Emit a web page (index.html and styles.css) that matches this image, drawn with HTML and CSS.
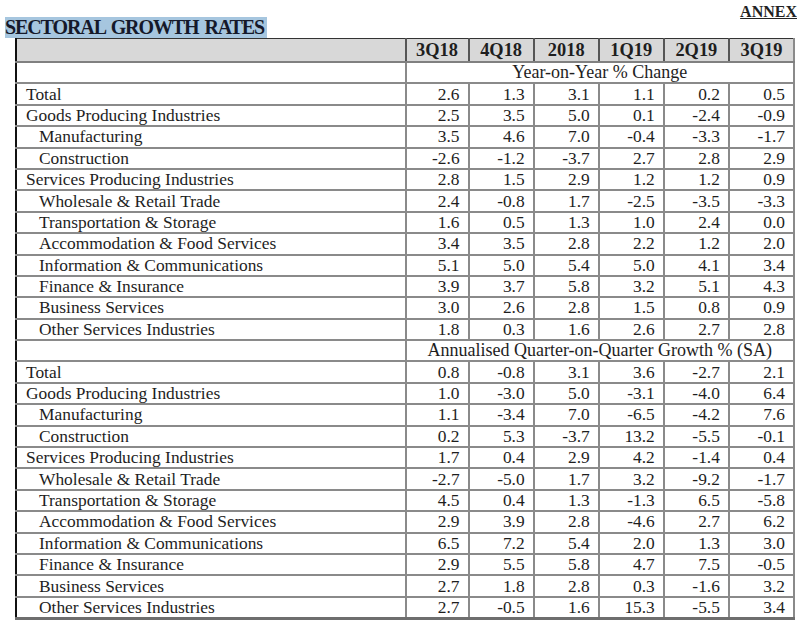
FILE: index.html
```html
<!DOCTYPE html>
<html>
<head>
<meta charset="utf-8">
<link rel="stylesheet" href="styles.css">
</head>
<body>
<div class="page">
  <div class="annex">ANNEX</div>
  <div class="title-row"><span class="title">SECTORAL GROWTH RATES</span></div>
  <table class="grid">
    <colgroup>
      <col class="c-label">
      <col class="c1"><col class="c2"><col class="c3"><col class="c4"><col class="c5"><col class="c6">
    </colgroup>
    <thead>
      <tr class="head">
        <th></th><th>3Q18</th><th>4Q18</th><th>2018</th><th>1Q19</th><th>2Q19</th><th>3Q19</th>
      </tr>
    </thead>
    <tbody>
      <tr class="sub"><td></td><td colspan="6">Year-on-Year % Change</td></tr>
      <tr><td>Total</td><td>2.6</td><td>1.3</td><td>3.1</td><td>1.1</td><td>0.2</td><td>0.5</td></tr>
      <tr><td>Goods Producing Industries</td><td>2.5</td><td>3.5</td><td>5.0</td><td>0.1</td><td>-2.4</td><td>-0.9</td></tr>
      <tr><td class="in">Manufacturing</td><td>3.5</td><td>4.6</td><td>7.0</td><td>-0.4</td><td>-3.3</td><td>-1.7</td></tr>
      <tr><td class="in">Construction</td><td>-2.6</td><td>-1.2</td><td>-3.7</td><td>2.7</td><td>2.8</td><td>2.9</td></tr>
      <tr><td>Services Producing Industries</td><td>2.8</td><td>1.5</td><td>2.9</td><td>1.2</td><td>1.2</td><td>0.9</td></tr>
      <tr><td class="in">Wholesale &amp; Retail Trade</td><td>2.4</td><td>-0.8</td><td>1.7</td><td>-2.5</td><td>-3.5</td><td>-3.3</td></tr>
      <tr><td class="in">Transportation &amp; Storage</td><td>1.6</td><td>0.5</td><td>1.3</td><td>1.0</td><td>2.4</td><td>0.0</td></tr>
      <tr><td class="in">Accommodation &amp; Food Services</td><td>3.4</td><td>3.5</td><td>2.8</td><td>2.2</td><td>1.2</td><td>2.0</td></tr>
      <tr><td class="in">Information &amp; Communications</td><td>5.1</td><td>5.0</td><td>5.4</td><td>5.0</td><td>4.1</td><td>3.4</td></tr>
      <tr><td class="in">Finance &amp; Insurance</td><td>3.9</td><td>3.7</td><td>5.8</td><td>3.2</td><td>5.1</td><td>4.3</td></tr>
      <tr><td class="in">Business Services</td><td>3.0</td><td>2.6</td><td>2.8</td><td>1.5</td><td>0.8</td><td>0.9</td></tr>
      <tr><td class="in">Other Services Industries</td><td>1.8</td><td>0.3</td><td>1.6</td><td>2.6</td><td>2.7</td><td>2.8</td></tr>
      <tr class="sub"><td></td><td colspan="6">Annualised Quarter-on-Quarter Growth % (SA)</td></tr>
      <tr><td>Total</td><td>0.8</td><td>-0.8</td><td>3.1</td><td>3.6</td><td>-2.7</td><td>2.1</td></tr>
      <tr><td>Goods Producing Industries</td><td>1.0</td><td>-3.0</td><td>5.0</td><td>-3.1</td><td>-4.0</td><td>6.4</td></tr>
      <tr><td class="in">Manufacturing</td><td>1.1</td><td>-3.4</td><td>7.0</td><td>-6.5</td><td>-4.2</td><td>7.6</td></tr>
      <tr><td class="in">Construction</td><td>0.2</td><td>5.3</td><td>-3.7</td><td>13.2</td><td>-5.5</td><td>-0.1</td></tr>
      <tr><td>Services Producing Industries</td><td>1.7</td><td>0.4</td><td>2.9</td><td>4.2</td><td>-1.4</td><td>0.4</td></tr>
      <tr><td class="in">Wholesale &amp; Retail Trade</td><td>-2.7</td><td>-5.0</td><td>1.7</td><td>3.2</td><td>-9.2</td><td>-1.7</td></tr>
      <tr><td class="in">Transportation &amp; Storage</td><td>4.5</td><td>0.4</td><td>1.3</td><td>-1.3</td><td>6.5</td><td>-5.8</td></tr>
      <tr><td class="in">Accommodation &amp; Food Services</td><td>2.9</td><td>3.9</td><td>2.8</td><td>-4.6</td><td>2.7</td><td>6.2</td></tr>
      <tr><td class="in">Information &amp; Communications</td><td>6.5</td><td>7.2</td><td>5.4</td><td>2.0</td><td>1.3</td><td>3.0</td></tr>
      <tr><td class="in">Finance &amp; Insurance</td><td>2.9</td><td>5.5</td><td>5.8</td><td>4.7</td><td>7.5</td><td>-0.5</td></tr>
      <tr><td class="in">Business Services</td><td>2.7</td><td>1.8</td><td>2.8</td><td>0.3</td><td>-1.6</td><td>3.2</td></tr>
      <tr class="last"><td class="in">Other Services Industries</td><td>2.7</td><td>-0.5</td><td>1.6</td><td>15.3</td><td>-5.5</td><td>3.4</td></tr>
    </tbody>
  </table>
</div>
</body>
</html>
```
FILE: styles.css
```css
html, body {
  margin: 0;
  padding: 0;
  background: #ffffff;
}
body {
  font-family: "Liberation Serif", "Times New Roman", serif;
  color: #1e1e1e;
}
.page {
  width: 797px;
  height: 627px;
  overflow: hidden;
}
.annex {
  height: 13px;
  padding-top: 4px;
  text-align: right;
  font-size: 16px;
  line-height: 15px;
  font-weight: bold;
  text-decoration: underline;
  color: #222;
  overflow: visible;
}
.title-row {
  height: 21px;
  padding-left: 5px;
}
.title {
  display: inline-block;
  background: #a6c6df;
  font-size: 20px;
  line-height: 21px;
  letter-spacing: -1.1px;
  word-spacing: 2px;
  font-weight: bold;
  color: #15192a;
  padding-right: 3px;
}
.grid {
  margin-left: 15px;
  border-collapse: collapse;
  table-layout: fixed;
  width: 780px;
  font-size: 17.4px;
  border-left: 2px solid #111;
  border-right: 2px solid #8a8a8a;
  border-top: 1px solid #333;
  border-bottom: 3px solid #6e6e6e;
}
.c-label { width: 389px; }
.c1 { width: 63px; }
.c2 { width: 65px; }
.c3 { width: 65px; }
.c4 { width: 65px; }
.c5 { width: 65px; }
.c6 { width: 65px; }
.grid th, .grid td {
  padding: 0;
  white-space: nowrap;
  overflow: hidden;
}
.head th {
  background: #d8d8d8;
  height: 22px;
  font-size: 18.4px;
  font-weight: bold;
  text-align: center;
  border-left: 2px solid #555;
  border-bottom: 2px solid #808080;
  line-height: 22px;
}
.head th:first-child {
  border-left: none;
}
.grid tbody td {
  height: 19.4px;
  line-height: 19px;
  border-bottom: 2px solid #8a8a8a;
  border-left: 2px solid #8a8a8a;
  text-align: right;
  padding-right: 8px;
}
.grid tbody td:first-child {
  border-left: none;
  text-align: left;
  padding-left: 9px;
  padding-right: 0;
}
.grid tbody td.in {
  padding-left: 22px;
}
.grid tbody tr.sub td {
  text-align: center;
  padding-right: 0;
  font-size: 18px;
}
.grid tbody tr.last td {
  border-bottom: none;
}
```
